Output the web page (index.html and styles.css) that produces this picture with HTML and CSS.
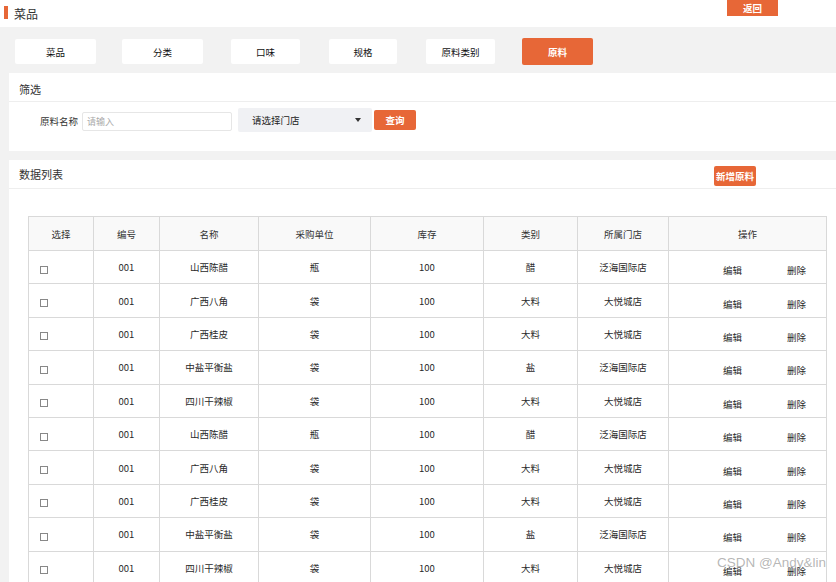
FILE: index.html
```html
<!DOCTYPE html>
<html lang="zh">
<head>
<meta charset="utf-8">
<title>原料</title>
<link rel="stylesheet" href="styles.css">
</head>
<body>
<div class="topbar">
  <span class="accent"></span>
  <span class="page-title">菜品</span>
  <a class="back-btn">返回</a>
</div>
<div class="tabs">
  <div class="tab">菜品</div>
  <div class="tab">分类</div>
  <div class="tab">口味</div>
  <div class="tab">规格</div>
  <div class="tab">原料类别</div>
  <div class="tab active">原料</div>
</div>
<div class="panel filter">
  <div class="panel-head">筛选</div>
  <div class="form-row">
    <span class="label">原料名称</span>
    <div class="input">请输入</div>
    <div class="select"><span>请选择门店</span><span class="caret"></span></div>
    <a class="btn query">查询</a>
  </div>
</div>
<div class="panel list">
  <div class="panel-head">
    <span>数据列表</span>
    <a class="btn add">新增原料</a>
  </div>
  <table class="grid">
    <colgroup>
      <col class="c1"><col class="c2"><col class="c3"><col class="c4"><col class="c5"><col class="c6"><col class="c7"><col class="c8">
    </colgroup>
    <thead>
      <tr><th>选择</th><th>编号</th><th>名称</th><th>采购单位</th><th>库存</th><th>类别</th><th>所属门店</th><th>操作</th></tr>
    </thead>
    <tbody>
      <tr><td class="chk"><span class="box"></span></td><td>001</td><td>山西陈醋</td><td>瓶</td><td>100</td><td>醋</td><td>泛海国际店</td><td class="ops"><span>编辑</span><span>删除</span></td></tr>
      <tr><td class="chk"><span class="box"></span></td><td>001</td><td>广西八角</td><td>袋</td><td>100</td><td>大料</td><td>大悦城店</td><td class="ops"><span>编辑</span><span>删除</span></td></tr>
      <tr><td class="chk"><span class="box"></span></td><td>001</td><td>广西桂皮</td><td>袋</td><td>100</td><td>大料</td><td>大悦城店</td><td class="ops"><span>编辑</span><span>删除</span></td></tr>
      <tr><td class="chk"><span class="box"></span></td><td>001</td><td>中盐平衡盐</td><td>袋</td><td>100</td><td>盐</td><td>泛海国际店</td><td class="ops"><span>编辑</span><span>删除</span></td></tr>
      <tr><td class="chk"><span class="box"></span></td><td>001</td><td>四川干辣椒</td><td>袋</td><td>100</td><td>大料</td><td>大悦城店</td><td class="ops"><span>编辑</span><span>删除</span></td></tr>
      <tr><td class="chk"><span class="box"></span></td><td>001</td><td>山西陈醋</td><td>瓶</td><td>100</td><td>醋</td><td>泛海国际店</td><td class="ops"><span>编辑</span><span>删除</span></td></tr>
      <tr><td class="chk"><span class="box"></span></td><td>001</td><td>广西八角</td><td>袋</td><td>100</td><td>大料</td><td>大悦城店</td><td class="ops"><span>编辑</span><span>删除</span></td></tr>
      <tr><td class="chk"><span class="box"></span></td><td>001</td><td>广西桂皮</td><td>袋</td><td>100</td><td>大料</td><td>大悦城店</td><td class="ops"><span>编辑</span><span>删除</span></td></tr>
      <tr><td class="chk"><span class="box"></span></td><td>001</td><td>中盐平衡盐</td><td>袋</td><td>100</td><td>盐</td><td>泛海国际店</td><td class="ops"><span>编辑</span><span>删除</span></td></tr>
      <tr><td class="chk"><span class="box"></span></td><td>001</td><td>四川干辣椒</td><td>袋</td><td>100</td><td>大料</td><td>大悦城店</td><td class="ops"><span>编辑</span><span>删除</span></td></tr>
    </tbody>
  </table>
</div>
<div class="watermark">CSDN @Andy&amp;lin</div>
</body>
</html>
```
FILE: styles.css
```css
html, body {
  margin: 0;
  padding: 0;
}
body {
  background: #f2f2f2;
  font-family: "Noto Sans CJK SC", "Noto Sans", sans-serif;
  color: #333;
  width: 836px;
  height: 582px;
  overflow: hidden;
  position: relative;
}
.topbar {
  height: 27px;
  background: #fff;
  display: flex;
  align-items: center;
}
.accent {
  width: 4px;
  height: 13px;
  background: #e76737;
  margin-left: 4px;
  margin-top: -2px;
}
.page-title {
  font-size: 12px;
  margin-left: 6px;
  color: #333;
}
.back-btn {
  align-self: flex-start;
  margin-left: auto;
  margin-right: 58px;
  width: 51px;
  height: 16px;
  background: #e76737;
  color: #fff;
  font-size: 9.5px;
  font-weight: bold;
  display: flex;
  align-items: center;
  justify-content: center;
}
.tabs {
  height: 43px;
  padding-top: 3px;
  padding-left: 15px;
  display: flex;
  align-items: center;
}
.tab {
  height: 25px;
  background: #fff;
  border-radius: 2px;
  font-size: 9.5px;
  color: #111;
  display: flex;
  align-items: center;
  justify-content: center;
}
.tab:nth-child(1) { width: 81px; margin-right: 26px; }
.tab:nth-child(2) { width: 81px; margin-right: 28px; }
.tab:nth-child(3) { width: 69px; margin-right: 29px; }
.tab:nth-child(4) { width: 68px; margin-right: 29px; }
.tab:nth-child(5) { width: 69px; margin-right: 27px; }
.tab.active {
  width: 71px;
  height: 27px;
  background: #e76737;
  color: #fff;
  font-weight: bold;
}
.panel {
  margin-left: 9px;
  background: #fff;
}
.filter {
  height: 78px;
}
.panel-head {
  height: 28px;
  border-bottom: 1px solid #eeeeee;
  display: flex;
  align-items: center;
  padding-left: 10px;
  font-size: 11px;
  color: #333;
}
.filter .panel-head {
  height: 24px;
  padding-top: 4px;
}
.form-row {
  display: flex;
  align-items: center;
  height: 24px;
  padding-top: 6px;
}
.label {
  margin-left: 31px;
  font-size: 9.5px;
  width: 38px;
  margin-top: 2px;
  color: #333;
}
.input {
  margin-left: 4px;
  width: 144px;
  height: 17px;
  border: 1px solid #e6e6e6;
  border-radius: 2px;
  font-size: 9px;
  color: #aaa;
  display: flex;
  align-items: center;
  padding-left: 4px;
  margin-top: 3px;
}
.select {
  margin-left: 6px;
  width: 134px;
  height: 24px;
  background: #f0f1f4;
  border-radius: 2px;
  display: flex;
  align-items: center;
  font-size: 9.5px;
  color: #222;
  padding-left: 14px;
  box-sizing: border-box;
}
.caret {
  margin-left: auto;
  margin-right: 11px;
  width: 0;
  height: 0;
  border-left: 3.5px solid transparent;
  border-right: 3.5px solid transparent;
  border-top: 4px solid #333;
}
.btn {
  background: #e76737;
  color: #fff;
  font-size: 9.5px;
  font-weight: bold;
  border-radius: 2px;
  display: flex;
  align-items: center;
  justify-content: center;
}
.query {
  margin-left: 2px;
  width: 42px;
  height: 20px;
}
.list {
  margin-top: 9px;
  height: 500px;
}
.add {
  margin-left: auto;
  margin-right: 80px;
  width: 42px;
  height: 20px;
  margin-top: 4px;
}
.grid {
  margin-top: 27px;
  margin-left: 19px;
  width: 798px;
  border-collapse: collapse;
  table-layout: fixed;
  font-size: 9.5px;
  color: #2a2a2a;
}
.c1 { width: 65px; }
.c2 { width: 66px; }
.c3 { width: 99px; }
.c4 { width: 112px; }
.c5 { width: 113px; }
.c6 { width: 94px; }
.c7 { width: 91px; }
.c8 { width: 158px; }
.grid th, .grid td {
  border: 1px solid #d9d9d9;
  text-align: center;
  vertical-align: middle;
  padding: 0;
  white-space: nowrap;
  line-height: 12px;
}
.grid thead tr {
  height: 34px;
}
.grid tbody tr {
  height: 33.4px;
}
.grid th {
  background: #f9f9f9;
  font-weight: normal;
  color: #333;
}
.grid td.chk {
  text-align: left;
  padding-left: 11px;
  padding-top: 5px;
}
.box {
  display: block;
  width: 6px;
  height: 6px;
  border: 1px solid #888;
}
.grid td.ops {
  text-align: left;
  padding-left: 54px;
  padding-top: 6px;
}
.ops span {
  display: inline-block;
}
.ops span + span {
  margin-left: 45px;
}
.watermark {
  position: absolute;
  left: 717px;
  top: 555px;
  font-family: "Liberation Sans", sans-serif;
  font-size: 13.5px;
  color: rgba(120, 120, 120, 0.55);
  white-space: nowrap;
}
```
